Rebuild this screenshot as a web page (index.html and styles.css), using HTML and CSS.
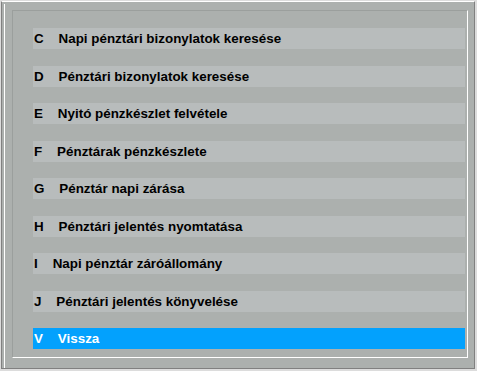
FILE: index.html
```html
<!DOCTYPE html>
<html>
  <head>
    <meta charset="utf-8">
    <title>Pénztár</title>
    <link rel="stylesheet" href="styles.css">
  </head>
  <body>
    <div class="frame">
      <div class="inner">
        <div class="groove">
          <ul class="menu">
            <li><span class="key">C</span>Napi pénztári bizonylatok keresése</li>
            <li><span class="key">D</span>Pénztári bizonylatok keresése</li>
            <li><span class="key">E</span>Nyitó pénzkészlet felvétele</li>
            <li><span class="key">F</span>Pénztárak pénzkészlete</li>
            <li><span class="key">G</span>Pénztár napi zárása</li>
            <li><span class="key">H</span>Pénztári jelentés nyomtatása</li>
            <li><span class="key">I</span>Napi pénztár záróállomány</li>
            <li><span class="key">J</span>Pénztári jelentés könyvelése</li>
            <li class="active"><span class="key">V</span>Vissza</li>
          </ul>
        </div>
      </div>
    </div>
  </body>
</html>
```

FILE: styles.css
```css
html, body {
  margin: 0;
  background: #dcdcdc;
}
.frame {
  box-sizing: border-box;
  width: 474px;
  height: 368px;
  margin: 1px 2px 2px 1px;
  border: 1px solid #808080;
  border-top-color: #fff;
  padding: 2px 0 0 2px;
  background: #acb0ae;
  display: flex;
}
.inner {
  flex: 1;
  display: flex;
  border-left: 1px solid #fff;
  padding: 6px 6px 10px 7px;
}
.groove {
  flex: 1;
  border: 1px solid #fff;
  border-top-color: #9b9f9d;
  border-left-color: #9b9f9d;
  padding: 17px 2px 0 20px;
}
.menu {
  list-style: none;
  margin: 0;
  padding: 0;
  display: flex;
  flex-direction: column;
  gap: 16.5px;
}
.menu li {
  height: 21px;
  line-height: 21px;
  background: #b8bcbc;
  font-family: "Liberation Sans", Arial, sans-serif;
  font-weight: bold;
  font-size: 13.4px;
  color: #000;
  white-space: pre;
  padding-left: 1px;
}
.key::after {
  content: "    ";
}
.menu li.active {
  background: #03a1fd;
  color: #fff;
}
```
